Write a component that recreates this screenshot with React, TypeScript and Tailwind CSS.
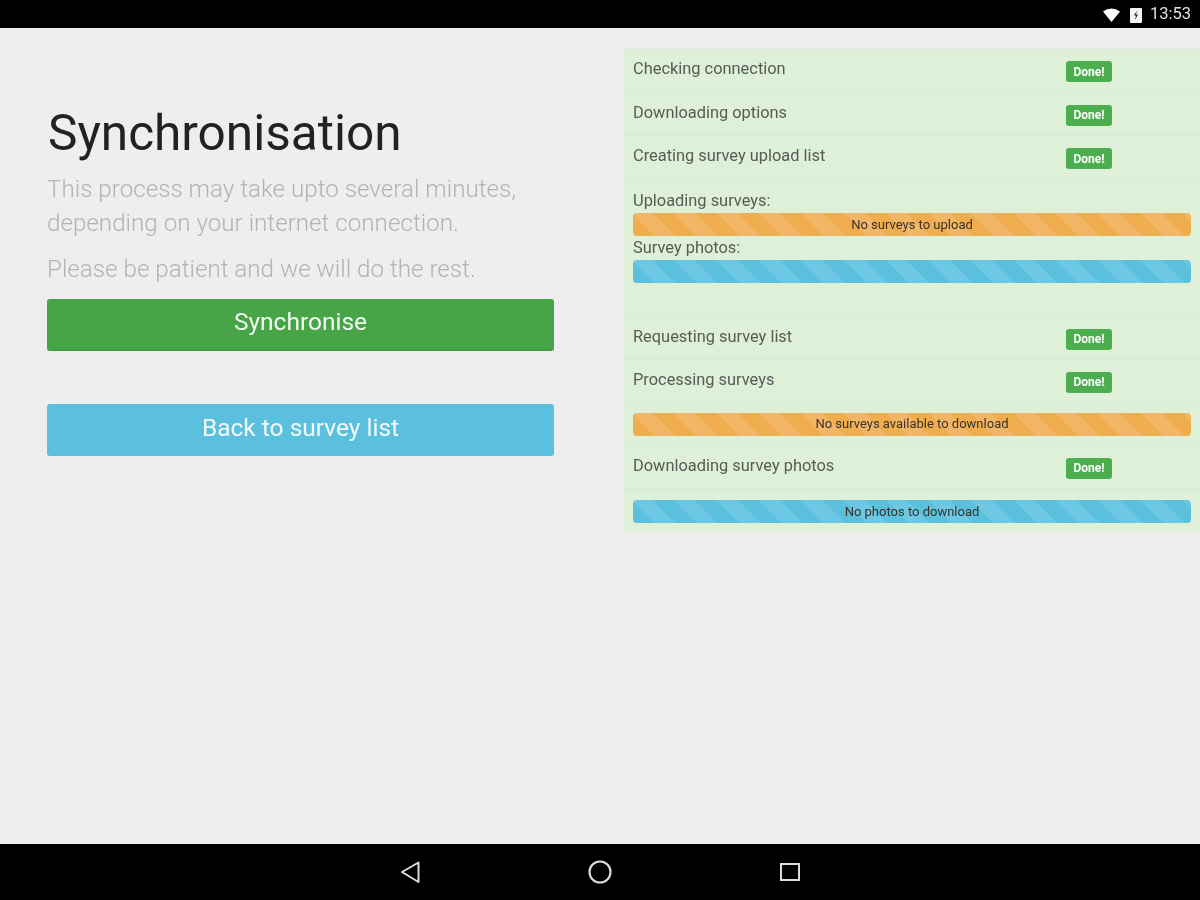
const orangeBar = 'bg-[repeating-linear-gradient(45deg,#f0ad4e_0px,#f0ad4e_15px,#f3b566_15px,#f3b566_30px)]';
const blueBar = 'bg-[repeating-linear-gradient(45deg,#5bc0de_0px,#5bc0de_15px,#6dc8e3_15px,#6dc8e3_30px)]';

function Done() {
  return (
    <span className="mt-[2px] flex h-[21px] w-[46px] items-center justify-center rounded-[3px] bg-[#4cae4f] text-[12px] font-bold leading-none text-white">
      Done!
    </span>
  );
}

function StepRow({ label, height }: { label: string; height: string }) {
  return (
    <div className={`flex items-center border-b border-[#d9ead3] pl-[9px] ${height}`}>
      <span className="mb-[2px] w-[433px] text-[16.4px] leading-none text-[#555c55]">{label}</span>
      <Done />
    </div>
  );
}

function Bar({ color, text }: { color: string; text?: string }) {
  return (
    <div className={`flex h-[23px] items-center justify-center rounded-[4px] pb-[1px] text-[13px] leading-none text-[#3a3128] ${color}`}>
      {text}
    </div>
  );
}

export default function App() {
  return (
    <div className="flex h-[900px] w-[1200px] flex-col bg-[#eeeeee] font-['Roboto',sans-serif] blur-[0.5px]">
      {/* status bar */}
      <div className="flex h-[28px] items-center justify-end bg-black pr-[9px] text-white">
        <svg width="17" height="14" viewBox="0 0 17 14" className="mr-[10px] mt-[2px]">
          <path d="M0 3.5 Q8.5 -2.5 17 3.5 L8.5 14 Z" fill="#fff" />
        </svg>
        <svg width="12" height="15" viewBox="0 0 12 15" className="mr-[8px] mt-[2px]">
          <rect x="0" y="0" width="12" height="15" rx="1" fill="#f4f4f4" />
          <path d="M7 2.5 L4 7.5 H6 L5 12 L8 6.5 H6 Z" fill="#222" />
        </svg>
        <span className="text-[16.5px] leading-none text-[#e0e0e0]">13:53</span>
      </div>

      <div className="flex flex-1 items-start">
        {/* left column */}
        <div className="ml-[47px] w-[507px] pt-[77px]">
          <h1 className="pl-[1px] text-[49.5px] font-normal leading-[56px] text-[#222222]">Synchronisation</h1>
          <p className="mt-[11px] text-[24.2px] font-light leading-[34px] text-[#b3b3b3]">
            This process may take upto several minutes, depending on your internet connection.
          </p>
          <p className="mt-[12px] text-[24.2px] font-light leading-[34px] text-[#b3b3b3]">
            Please be patient and we will do the rest.
          </p>
          <button className="mt-[13px] block h-[52px] w-full rounded-[3px] border-b border-[#409540] bg-[#47a447] pb-[4px] text-[24.5px] text-[#f2f8f2]">
            Synchronise
          </button>
          <button className="mt-[53px] block h-[52px] w-full rounded-[3px] bg-[#5bc0de] pb-[4px] text-[24.5px] text-[#f2fafd]">
            Back to survey list
          </button>
        </div>

        {/* progress panel */}
        <div className="ml-[70px] mt-[20px] w-[576px] border-t border-[#e4e4e4] bg-[#dff0d8]">
          <StepRow label="Checking connection" height="h-[44px]" />
          <StepRow label="Downloading options" height="h-[43px]" />
          <StepRow label="Creating survey upload list" height="h-[44px]" />
          <div className="h-[137px] border-b border-[#d9ead3] px-[9px] pt-[11px]">
            <div className="text-[16.4px] leading-[19px] text-[#555c55]">Uploading surveys:</div>
            <div className="mt-[3px]">
              <Bar color={orangeBar} text="No surveys to upload" />
            </div>
            <div className="mt-[2px] text-[16.4px] leading-[19px] text-[#555c55]">Survey photos:</div>
            <div className="mt-[3px]">
              <Bar color={blueBar} />
            </div>
          </div>
          <StepRow label="Requesting survey list" height="h-[43px]" />
          <StepRow label="Processing surveys" height="h-[43px]" />
          <div className="flex h-[43px] flex-col justify-center border-b border-[#d9ead3] px-[9px]">
            <Bar color={orangeBar} text="No surveys available to download" />
          </div>
          <StepRow label="Downloading survey photos" height="h-[43px]" />
          <div className="flex h-[43px] flex-col justify-center px-[9px] pt-[2px]">
            <Bar color={blueBar} text="No photos to download" />
          </div>
        </div>
      </div>

      {/* nav bar */}
      <div className="flex h-[56px] items-center justify-center gap-[166px] bg-black">
        <svg width="24" height="24" viewBox="0 0 24 24">
          <path d="M20.5 2.5 V22 L4 12 Z" fill="none" stroke="#dcdcdc" strokeWidth="2" strokeLinejoin="round" />
        </svg>
        <svg width="24" height="24" viewBox="0 0 24 24">
          <circle cx="12" cy="12" r="10.5" fill="none" stroke="#dcdcdc" strokeWidth="2.2" />
        </svg>
        <svg width="24" height="24" viewBox="0 0 24 24">
          <rect x="3" y="4" width="18" height="16" fill="none" stroke="#dcdcdc" strokeWidth="2" />
        </svg>
      </div>
    </div>
  );
}
